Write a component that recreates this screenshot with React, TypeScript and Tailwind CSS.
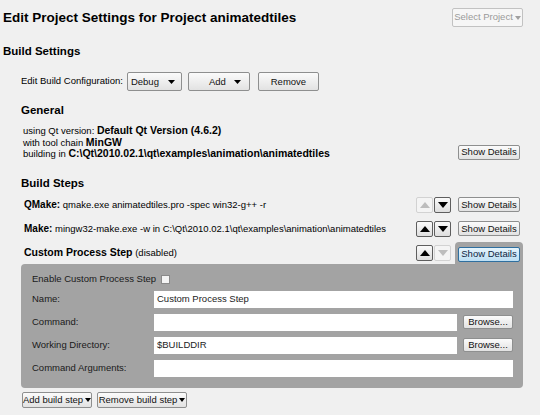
import { FC, ReactNode } from "react";
import { twMerge } from "tailwind-merge";

const regular = "font-['Liberation_Sans',sans-serif] text-[9.5px]";
const bold = "font-['Liberation_Sans',sans-serif] font-bold";

const Tri: FC<{ up?: boolean; color?: string; w?: number; h?: number }> = ({
  up,
  color = "#000",
  w = 10,
  h = 6,
}) => (
  <svg width={w} height={h} viewBox={`0 0 ${w} ${h}`} className="shrink-0">
    {up ? (
      <polygon points={`0,${h} ${w / 2},0 ${w},${h}`} fill={color} />
    ) : (
      <polygon points={`0,0 ${w},0 ${w / 2},${h}`} fill={color} />
    )}
  </svg>
);

const Btn: FC<{ className?: string; children: ReactNode }> = ({ className = "", children }) => (
  <div
    className={twMerge(
      `flex items-center justify-center whitespace-nowrap rounded-[2px] border border-[#8e8f8f] bg-gradient-to-b from-[#fbfbfb] to-[#e2e2e2] ${regular} leading-none text-[#111]`,
      className
    )}
  >
    {children}
  </div>
);

const ArrowBtn: FC<{ up?: boolean; disabled?: boolean }> = ({ up, disabled }) => (
  <div
    className={`flex h-[16px] w-[17px] items-center justify-center rounded-[2px] border ${
      disabled ? "border-[#d2d2d2] bg-[#f4f4f4]" : "border-[#5e5e5e] bg-gradient-to-b from-[#fafafa] to-[#dedede]"
    }`}
  >
    <Tri up={up} color={disabled ? "#bdbdbd" : "#000"} />
  </div>
);

const Field: FC<{ value?: string; className?: string }> = ({ value, className = "" }) => (
  <div className={`flex h-[17px] items-center bg-white px-[3px] ${regular} text-[#222] ${className}`}>{value}</div>
);

const StepRow: FC<{ label: string; text: string; upDisabled?: boolean }> = ({ label, text, upDisabled }) => (
  <div className="flex h-[16px] items-center pl-[24px] pr-[20px]">
    <div className={`min-w-0 flex-1 whitespace-nowrap ${regular}`}>
      <span className={`${bold} text-[10px]`}>{label}</span> {text}
    </div>
    <div className="flex gap-px">
      <ArrowBtn up disabled={upDisabled} />
      <ArrowBtn />
    </div>
    <Btn className="ml-[7px] h-[15px] w-[62px]">Show Details</Btn>
  </div>
);

const InfoLine: FC<{ label: string; value: string }> = ({ label, value }) => (
  <div className={`h-[11.5px] whitespace-nowrap leading-[11.5px] ${regular}`}>
    {label} <span className={`${bold} text-[10.5px]`}>{value}</span>
  </div>
);

const App: FC = () => {
  return (
    <div className="h-[415px] w-[540px] overflow-hidden bg-[#f0f0f0] text-black">
      <div className="flex items-start justify-between pl-[3px] pr-[17px] pt-[8px]">
        <h1 className={`${bold} text-[13.5px] leading-[20px]`}>Edit Project Settings for Project animatedtiles</h1>
        <div
          className={`flex h-[19px] w-[71px] items-center justify-center gap-[2px] whitespace-nowrap rounded-[2px] border border-[#c2c2c2] bg-[#f6f6f6] ${regular} text-[#9a9a9a]`}
        >
          Select Project
          <Tri w={6} h={4} color="#a0a0a0" />
        </div>
      </div>

      <div className={`mt-[15px] pl-[3px] ${bold} text-[11.5px] leading-[16px]`}>Build Settings</div>

      <div className="mt-[13px] flex h-[19px] items-center pl-[21px]">
        <span className={regular}>Edit Build Configuration:</span>
        <Btn className="ml-[4px] h-[19px] w-[55px] justify-between pl-[3px] pr-[6px]">
          Debug
          <Tri w={7} h={4} />
        </Btn>
        <Btn className="ml-[6px] h-[19px] w-[62px] justify-between pl-[20px] pr-[8px]">
          Add
          <Tri w={7} h={4} />
        </Btn>
        <Btn className="ml-[8px] h-[19px] w-[61px]">Remove</Btn>
      </div>

      <div className={`mt-[11px] pl-[21px] ${bold} text-[11.5px] leading-[16px]`}>General</div>

      <div className="mt-[7px] flex items-end justify-between pl-[23px] pr-[20px]">
        <div>
          <InfoLine label="using Qt version:" value="Default Qt Version (4.6.2)" />
          <InfoLine label="with tool chain" value="MinGW" />
          <InfoLine label="building in" value={"C:\\Qt\\2010.02.1\\qt\\examples\\animation\\animatedtiles"} />
        </div>
        <Btn className="h-[15px] w-[62px]">Show Details</Btn>
      </div>

      <div className={`mt-[15px] pl-[21px] ${bold} text-[11.5px] leading-[16px]`}>Build Steps</div>

      <div className="mt-[6px] flex flex-col gap-[8px]">
        <StepRow label="QMake:" text="qmake.exe animatedtiles.pro -spec win32-g++ -r" upDisabled />
        <StepRow
          label="Make:"
          text={"mingw32-make.exe -w in C:\\Qt\\2010.02.1\\qt\\examples\\animation\\animatedtiles"}
        />
      </div>

      <div className="mt-[5px] flex h-[22px] items-center pl-[24px] pr-[17px]">
        <div className={`min-w-0 flex-1 whitespace-nowrap ${regular}`}>
          <span className={`${bold} text-[10.5px]`}>Custom Process Step</span> (disabled)
        </div>
        <div className="flex gap-px">
          <ArrowBtn up />
          <ArrowBtn disabled />
        </div>
        <div className="ml-[4px] h-full w-[68px] rounded-t-[4px] bg-[#a3a3a3] pl-[3px] pr-[3px] pt-[5px]">
          <div
            className={`flex h-[15px] w-[62px] items-center justify-center whitespace-nowrap rounded-[2px] border border-[#2f6f9f] bg-gradient-to-b from-[#e6f4fc] to-[#bcdff4] ${regular} leading-none text-[#0c2340]`}
          >
            Show Details
          </div>
        </div>
      </div>

      <div className="ml-[21px] mr-[17px] rounded-b-[4px] rounded-tl-[4px] bg-[#a3a3a3] pb-[11px] pl-[11px] pr-[10px] pt-[8px] text-[#1a1a1a]">
        <div className="flex h-[16px] items-center">
          <span className={regular}>Enable Custom Process Step</span>
          <div className="ml-[5px] h-[9px] w-[9px] border border-[#8a8a8a] bg-[#f4f4f4]" />
        </div>
        <div className="mt-[3px] grid grid-cols-[122px_1fr] items-center gap-y-[6px]">
          <span className={regular}>Name:</span>
          <Field value="Custom Process Step" />
          <span className={regular}>Command:</span>
          <div className="flex items-center gap-[6px]">
            <Field className="flex-1" />
            <Btn className="h-[14px] w-[50px]">Browse...</Btn>
          </div>
          <span className={regular}>Working Directory:</span>
          <div className="flex items-center gap-[6px]">
            <Field value="$BUILDDIR" className="flex-1" />
            <Btn className="h-[14px] w-[50px]">Browse...</Btn>
          </div>
          <span className={regular}>Command Arguments:</span>
          <Field />
        </div>
      </div>

      <div className="mt-[4px] flex gap-[5px] pl-[22px]">
        <Btn className="h-[16px] w-[70px] gap-[2px]">
          Add build step
          <Tri w={6} h={4} />
        </Btn>
        <Btn className="h-[16px] w-[90px] gap-[2px]">
          Remove build step
          <Tri w={6} h={4} />
        </Btn>
      </div>
    </div>
  );
};

export default App;
